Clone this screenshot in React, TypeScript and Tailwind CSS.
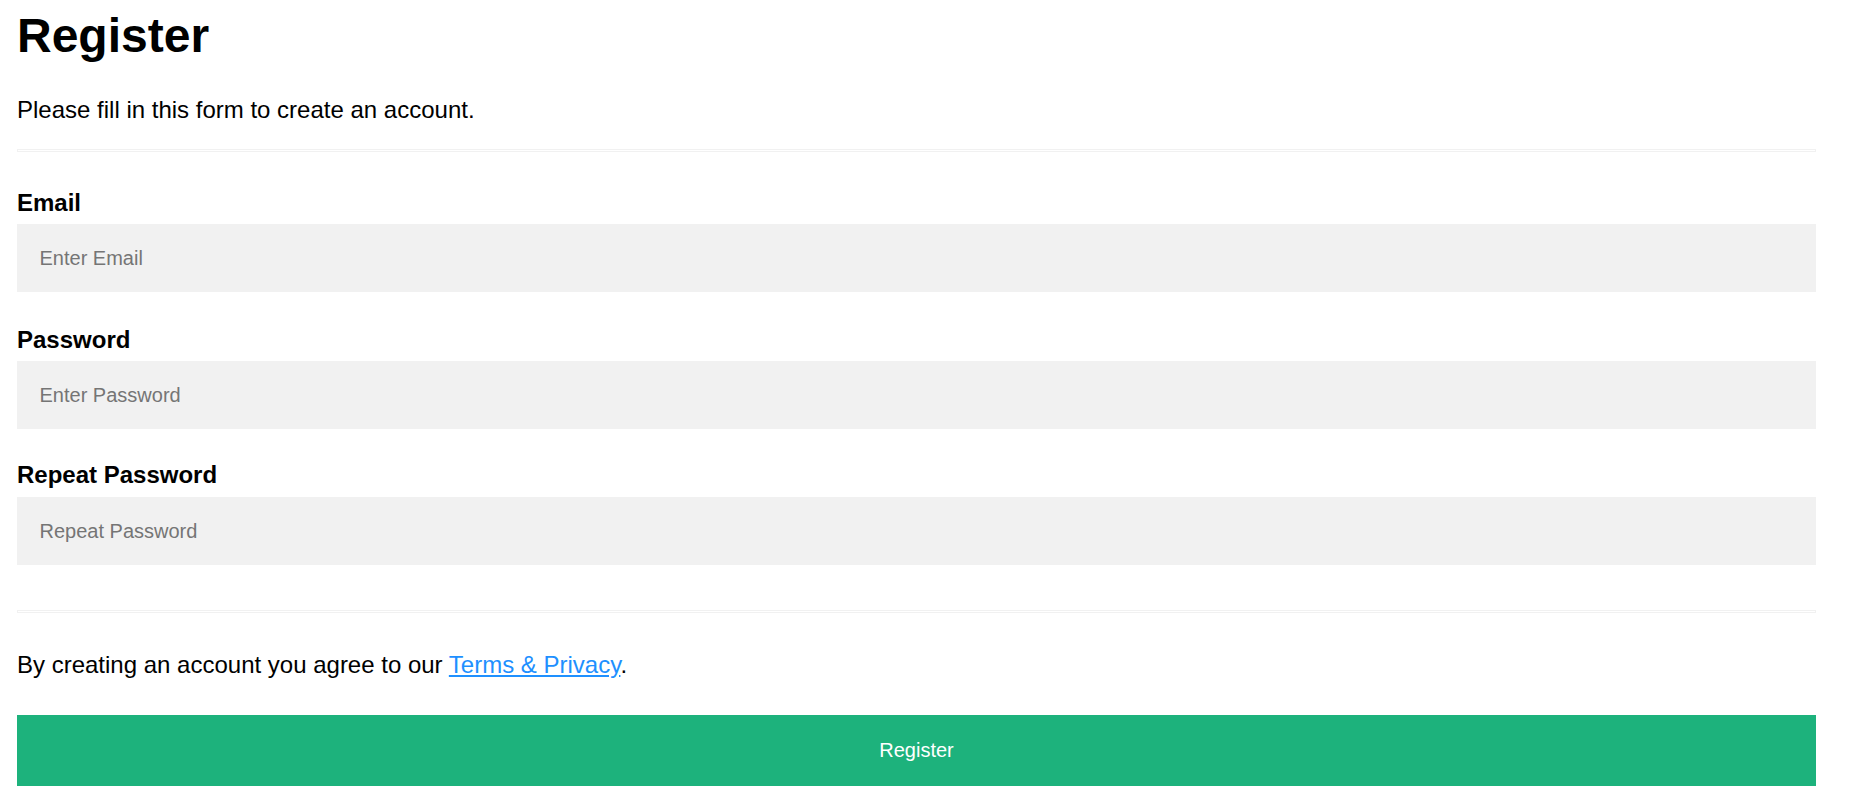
import React from "react";

export default function App() {
  return (
    <div className="min-h-[811px] bg-white font-['Liberation_Sans',Arial,sans-serif] text-black">
      <form className="ml-[17px] w-[1799px] flex flex-col" onSubmit={(e) => e.preventDefault()}>
        <h1 className="mt-[8px] text-[48px] font-bold leading-[55px]">Register</h1>
        <p className="mt-[33px] text-[24px] leading-[28px]">Please fill in this form to create an account.</p>
        <hr className="mt-[25px] h-[3px] border-[1.5px] border-solid border-[#f1f1f1]" />

        <label className="mt-[37px] text-[24px] font-bold leading-[28px]">Email</label>
        <input
          type="text"
          placeholder="Enter Email"
          className="mt-[7px] h-[68px] w-full bg-[#f1f1f1] px-[22.5px] text-[20px] outline-none placeholder:text-[#757575]"
        />

        <label className="mt-[34px] text-[24px] font-bold leading-[28px]">Password</label>
        <input
          type="password"
          placeholder="Enter Password"
          className="mt-[7px] h-[68px] w-full bg-[#f1f1f1] px-[22.5px] text-[20px] outline-none placeholder:text-[#757575]"
        />

        <label className="mt-[32px] text-[24px] font-bold leading-[28px]">Repeat Password</label>
        <input
          type="password"
          placeholder="Repeat Password"
          className="mt-[8px] h-[68px] w-full bg-[#f1f1f1] px-[22.5px] text-[20px] outline-none placeholder:text-[#757575]"
        />

        <hr className="mt-[45px] h-[3px] border-[1.5px] border-solid border-[#f1f1f1]" />

        <p className="mt-[38px] text-[24px] leading-[28px]">
          By creating an account you agree to our{" "}
          <a href="#" className="text-[#1e90ff] underline">
            Terms &amp; Privacy
          </a>
          .
        </p>

        <button
          type="submit"
          className="mt-[36px] h-[71px] w-full bg-[#1db27c] text-[20px] leading-[23px] text-white"
        >
          Register
        </button>
      </form>
    </div>
  );
}
